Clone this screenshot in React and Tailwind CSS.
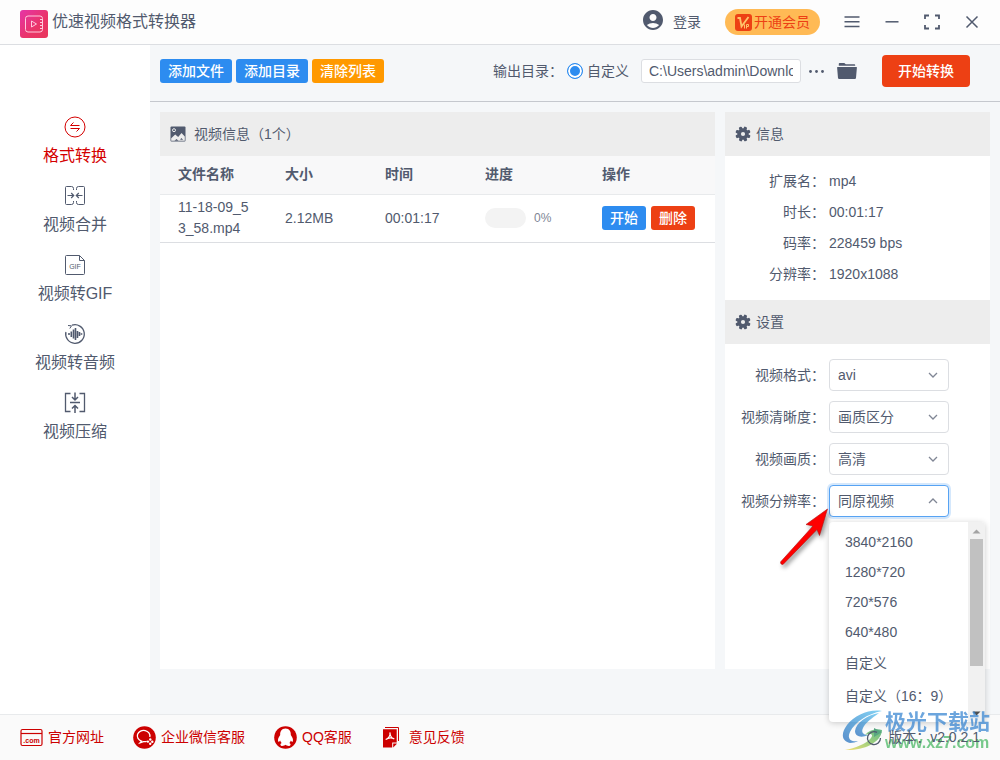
import React, { useState } from 'react';
import { MdAccountCircle } from 'react-icons/md';

const menus = [
  { key: 'convert', label: '格式转换' },
  { key: 'merge', label: '视频合并' },
  { key: 'gif', label: '视频转GIF' },
  { key: 'audio', label: '视频转音频' },
  { key: 'compress', label: '视频压缩' }
];

const files = [
  { name: '11-18-09_53_58.mp4', size: '2.12MB', time: '00:01:17', progress: 0 }
];

const info = [
  { label: '扩展名：', value: 'mp4' },
  { label: '时长：', value: '00:01:17' },
  { label: '码率：', value: '228459 bps' },
  { label: '分辨率：', value: '1920x1088' }
];

const settings = [
  { id: 'format', label: '视频格式：', options: ['avi', 'mp4', 'mov'] },
  { id: 'clarity', label: '视频清晰度：', options: ['画质区分', '自定义'] },
  { id: 'quality', label: '视频画质：', options: ['高清', '标清'] },
  { id: 'resolution', label: '视频分辨率：', options: ['同原视频', '3840*2160', '1280*720', '720*576', '640*480'] }
];

const resolutions = ['3840*2160', '1280*720', '720*576', '640*480'];
const customResolutions = ['自定义', '自定义（16：9）'];

function MenuIcon({ name }) {
  const props = { viewBox: '0 0 22 22', className: 'w-[22px] h-[22px]', fill: 'none', stroke: 'currentColor', strokeWidth: 1, 'aria-hidden': true };
  if (name === 'convert') {
    return (
      <svg {...props}>
        <circle cx="11" cy="11" r="10" />
        <path d="M15.5 9.5H6.5L9.5 6.5M6.500 12.500h9l-3 3" />
      </svg>
    );
  }
  if (name === 'merge') {
    return (
      <svg {...props}>
        <path d="M9.500 5V3.500a2 2 0 0 0-2-2h-5a1 1 0 0 0-1 1v16a1 1 0 0 0 1 1h5a2 2 0 0 0 2-2V16M12.500 5V3.500a2 2 0 0 1 2-2h5a1 1 0 0 1 1 1v16a1 1 0 0 1-1 1h-5a2 2 0 0 1-2-2V16" />
        <path strokeWidth="1.200" d="M3.500 10.500h6M7.200 8l2.500 2.500L7.200 13M18.500 10.500h-6M14.800 8l-2.500 2.500 2.500 2.500" />
      </svg>
    );
  }
  if (name === 'gif') {
    return (
      <svg {...props}>
        <path d="M15.500 1.500h-13a1 1 0 0 0-1 1v17a1 1 0 0 0 1 1h17a1 1 0 0 0 1-1v-13zv5h5" />
        <text x="11" y="15" textAnchor="middle" fontSize="7" stroke="none" fill="currentColor" className="font-['Liberation_Sans',sans-serif]">GIF</text>
      </svg>
    );
  }
  if (name === 'audio') {
    return (
      <svg {...props}>
        <path strokeWidth="1.300" d="M8 2.200A9.300 9.300 0 1 1 1.900 9" />
        <path strokeWidth="1" d="M4 2.500l3.500.3L5.800 5.500" />
        <path strokeWidth="1.600" d="M5 10v2M7.300 8.500v5.500M9.500 6.500v9M11.500 5v12M13.500 8v7M15.500 9v4M17.500 10.300v1.500" />
      </svg>
    );
  }
  return (
    <svg {...props}>
      <path strokeWidth="1.300" d="M6.500 1.500h-5v18h5M15.500 1.500h5v18h-5" />
      <path strokeWidth="1.500" d="M6 10.500h10M11 .5v7M8 5l3 3 3-3M11 21v-7M8 16.500l3-3 3 3" />
    </svg>
  );
}

function GearIcon() {
  return (
    <svg viewBox="0 0 16 16" className="w-4 h-4" fill="currentColor" aria-hidden="true">
      {[0, 45, 90, 135].map((angle) => (
        <rect key={angle} x="6.400" y="0.400" width="3.200" height="15.200" rx="1" transform={`rotate(${angle + 22} 8 8)`} />
      ))}
      <circle cx="8" cy="8" r="5.700" />
      <circle cx="8" cy="8" r="2.100" fill="#ededed" />
    </svg>
  );
}

function PanelTitle({ icon, gap, children }) {
  return (
    <h2 className={`h-11 flex items-center bg-[#ededed] px-2.5 ${gap}`}>
      {icon}
      {children}
    </h2>
  );
}

function FooterIcon({ name }) {
  const props = { viewBox: '0 0 23 23', className: 'w-[23px] h-[23px]', 'aria-hidden': true };
  if (name === 'site') {
    return (
      <svg {...props} fill="none" stroke="#cc0000">
        <rect x="1" y="3.500" width="21" height="16" rx="1.500" strokeWidth="1.200" />
        <path strokeWidth="1.200" d="M1 7.500h21" />
        <text x="11.500" y="17" textAnchor="middle" fontSize="7" fontWeight="bold" stroke="none" fill="#cc0000" className="font-['Liberation_Sans',sans-serif]">.com</text>
      </svg>
    );
  }
  if (name === 'wechat') {
    return (
      <svg {...props}>
        <circle cx="11.500" cy="11.500" r="11.300" fill="#cc0000" />
        <path fill="none" stroke="#fff" strokeWidth="1.300" d="M16.800 11A6.300 5.500 0 1 0 8.500 15.100l-1.500 1.800 3.500-1.300c1.200.2 2.200.1 3.200-.3" />
        <g fill="#fff">
          <circle cx="17.300" cy="13.500" r="1.200" />
          <circle cx="19.300" cy="15.800" r="1.200" />
          <circle cx="14.900" cy="15.600" r="1.200" />
          <circle cx="17.200" cy="17.700" r="1.200" />
        </g>
      </svg>
    );
  }
  if (name === 'qq') {
    return (
      <svg {...props}>
        <circle cx="11.500" cy="11.500" r="11.300" fill="#cc0000" />
        <path fill="#fff" d="M11.500 2.500C7.500 2.500 6 5.500 6.200 9c-1.600 2.200-2.700 4.600-2 6.500.5.900 1.300-.2 1.900-1.100.3 1 .8 1.800 1.500 2.500-1.800.9-1.500 2.900.6 3 1.400 0 2.600-.4 3.300-1.100.7.700 1.900 1.100 3.300 1.100 2.100-.1 2.400-2.100.6-3 .7-.7 1.200-1.500 1.500-2.500.6.900 1.400 2 1.900 1.100.7-1.900-.4-4.300-2-6.500.2-3.500-1.300-6.500-5.300-6.500z" />
      </svg>
    );
  }
  return (
    <svg {...props}>
      <path fill="none" stroke="#cc0000" d="M4 1.500h13.500V15" />
      <path fill="#cc0000" d="M2 3.300h13.700v13.200h-4.500v5H2z" />
      <path fill="#cc0000" d="M12.200 17.500h3.500v.5l-3.500 3.500z" />
      <path fill="none" stroke="#fff" strokeWidth="1.200" d="M8.900 6.500c.8 3-1.500 6-4.200 7 2.500-1.700 6-2 8.500-.7-2-.3-4-2.800-4.300-6.300z" />
    </svg>
  );
}

const links = [
  { icon: 'site', label: '官方网址' },
  { icon: 'wechat', label: '企业微信客服' },
  { icon: 'qq', label: 'QQ客服' },
  { icon: 'pdf', label: '意见反馈' }
];

function Header() {
  return (
    <header className="h-[45px] flex items-center border-b border-[#dcdee2] bg-[#fdfdfd] pl-5 pr-2">
      <svg viewBox="0 0 28 28" className="w-7 h-7 mt-1" aria-hidden="true">
        <defs>
          <linearGradient id="logo" x1="0" y1="0" x2="1" y2="1">
            <stop offset="0" stopColor="#e535a8" />
            <stop offset="0.600" stopColor="#ea3468" />
            <stop offset="1" stopColor="#e8365c" />
          </linearGradient>
        </defs>
        <rect width="28" height="28" rx="3" fill="url(#logo)" />
        <g fill="none" stroke="#ffc9dc" strokeWidth="1">
          <rect x="5.500" y="6" width="17" height="16" rx="2.500" />
          <path d="M11.500 11v6l5-3zM20 9.500h2.500M20 12.500h2.500M20 15.500h2.500M20 18.500h2.500" />
        </g>
      </svg>
      <h1 className="ml-1 text-base leading-6">优速视频格式转换器</h1>
      <div className="flex-1"></div>
      <button className="flex items-center gap-2">
        <MdAccountCircle size={24} className="-mt-1" />
        登录
      </button>
      <button className="ml-6 h-[26px] px-2.5 flex items-center gap-0.5 rounded-full bg-[#ffba55] text-[#ed4014]">
        <svg viewBox="0 0 17 17" className="w-[17px] h-[17px]" aria-hidden="true">
          <rect width="17" height="17" rx="3" fill="#ed4014" />
          <path fill="none" stroke="#ffc46b" strokeWidth="1.800" d="M2.500 4h2.500l1.500 8.500L13.500 3" />
          <path fill="none" stroke="#ffc46b" strokeWidth="1" d="M9.500 10.500v4M11.500 14.500v-4h2v2h-2" />
        </svg>
        开通会员
      </button>
      <div className="ml-3 flex">
        <button aria-label="菜单" className="w-10 h-10 flex items-center justify-center">
          <svg viewBox="0 0 16 16" className="w-4 h-4" stroke="currentColor" strokeWidth="1.500"><path d="M.5 3h15M.5 7.800h15M.5 12.600h15" /></svg>
        </button>
        <button aria-label="最小化" className="w-10 h-10 flex items-center justify-center">
          <svg viewBox="0 0 16 16" className="w-4 h-4" stroke="currentColor" strokeWidth="1.500"><path d="M1.500 7.800h13" /></svg>
        </button>
        <button aria-label="最大化" className="w-10 h-10 flex items-center justify-center">
          <svg viewBox="0 0 16 16" className="w-4 h-4" fill="none" stroke="currentColor" strokeWidth="1.800"><path d="M1 5V1.500h4M11 1.500h4V5M15 11v3.500h-4M5 14.500H1V11" /></svg>
        </button>
        <button aria-label="关闭" className="w-10 h-10 flex items-center justify-center">
          <svg viewBox="0 0 16 16" className="w-4 h-4" stroke="currentColor" strokeWidth="1.500"><path d="M2.500 2.500l11 11M13.500 2.500l-11 11" /></svg>
        </button>
      </div>
    </header>
  );
}

function Toolbar() {
  const [path, setPath] = useState('C:\\Users\\admin\\Downloads');

  return (
    <div className="h-[57px] flex items-center border-b border-[#c5c8ce] pl-2.5 pr-[30px] pb-1">
      <div className="flex gap-1 text-white font-medium">
        <button className="h-6 px-2 rounded-[3px] bg-[#2d8cf0]">添加文件</button>
        <button className="h-6 px-2 rounded-[3px] bg-[#2d8cf0]">添加目录</button>
        <button className="h-6 px-2 rounded-[3px] bg-[#ff9900]">清除列表</button>
      </div>
      <div className="flex-1"></div>
      <span>输出目录：</span>
      <label className="ml-1 flex items-center gap-1">
        <input type="radio" name="output" defaultChecked
               className="appearance-none w-4 h-4 rounded-full border border-[#2d8cf0] bg-white checked:bg-[#2d8cf0] checked:shadow-[inset_0_0_0_2px_white]" />
        自定义
      </label>
      <input type="text" aria-label="输出目录" value={path} onChange={(e) => setPath(e.target.value)}
             className="ml-3 w-40 h-6 px-[7px] border border-[#dcdee2] rounded-[3px] bg-white" />
      <button aria-label="更多" className="ml-2">
        <svg viewBox="0 0 16 16" className="w-4 h-4" fill="currentColor"><circle cx="1.500" cy="8.500" r="1.400" /><circle cx="7.500" cy="8.500" r="1.400" /><circle cx="13.500" cy="8.500" r="1.400" /></svg>
      </button>
      <button aria-label="打开目录" className="ml-3">
        <svg viewBox="0 0 20 20" className="w-5 h-5" fill="currentColor">
          <path d="M1.800 4.800V3c0-.6.4-1 1-1h4.500l1.500 1.200h8.400c.6 0 1 .4 1 1v.600z" />
          <path d="M.6 6h18.800c.4 0 .6.3.5.6L19 17c-.1.700-.5 1-1.100 1H2.100c-.600 0-1-.3-1.100-1L.1 6.600c0-.3.1-.6.500-.6z" />
        </svg>
      </button>
      <button className="ml-[25px] h-8 px-4 rounded bg-[#ed4014] text-white font-medium">开始转换</button>
    </div>
  );
}

function FileList() {
  return (
    <section className="flex-1 bg-white">
      <PanelTitle gap="gap-2" icon={
        <svg viewBox="0 0 16 16" className="w-4 h-4" aria-hidden="true">
          <rect x="0.500" y="0.500" width="15" height="15" rx="1" fill="#515a6e" />
          <circle cx="4" cy="4.200" r="1.500" fill="none" stroke="#ededed" strokeWidth="1" />
          <path fill="#ededed" d="M1.200 14.800v-2.500l4-3.800 3 2.500 3.300-4 3.300 3.500v4.300z" />
          <path fill="#515a6e" d="M4.500 14.800l2-1.800 2 1.800zM10 13.500l1.500-1.500 1.500 2z" />
        </svg>
      }>
        视频信息（1个）
      </PanelTitle>
      <table className="w-full table-fixed text-left">
        <thead className="bg-[#f8f8f9]">
          <tr className="h-[38px] border-b border-[#e8eaec]">
            <th className="w-[107px] pl-[18px] font-bold">文件名称</th>
            <th className="w-[100px] pl-[18px] font-bold">大小</th>
            <th className="w-[100px] pl-[18px] font-bold">时间</th>
            <th className="w-[117px] pl-[18px] font-bold">进度</th>
            <th className="pl-[18px] font-bold">操作</th>
          </tr>
        </thead>
        <tbody>
          {files.map((file) => (
            <tr key={file.name} className="h-12 border-b border-[#dcdee2]">
              <td className="px-[18px] break-all">{file.name}</td>
              <td className="pl-[18px]">{file.size}</td>
              <td className="pl-[18px]">{file.time}</td>
              <td className="pl-[18px]">
                <div className="flex items-center gap-2 text-xs text-[#808695]">
                  <div className="w-[41px] h-5 rounded-full bg-[#f3f3f3] overflow-hidden">
                    <div className="h-full bg-[#2d8cf0]" style={{ width: `${file.progress}%` }}></div>
                  </div>
                  {file.progress}%
                </div>
              </td>
              <td className="pl-[18px]">
                <div className="flex gap-[5px] text-white font-medium">
                  <button className="h-6 px-2 rounded-[3px] bg-[#2d8cf0]">开始</button>
                  <button className="h-6 px-2 rounded-[3px] bg-[#ed4014]">删除</button>
                </div>
              </td>
            </tr>
          ))}
        </tbody>
      </table>
    </section>
  );
}

function ResolutionMenu({ onPick }) {
  return (
    <div className="absolute z-10 left-0 top-[37px] w-[156px] h-[200px] flex bg-white rounded shadow-[0_1px_6px_rgba(0,0,0,0.2)] overflow-hidden">
      <ul className="flex-1 pt-[5px]">
        {resolutions.map((item) => (
          <li key={item}>
            <button onClick={() => onPick(item)} className="w-full h-[30px] px-4 text-left">{item}</button>
          </li>
        ))}
        {customResolutions.map((item) => (
          <li key={item}>
            <button onClick={() => onPick(item)} className="w-full h-[33px] px-4 text-left whitespace-nowrap">{item}</button>
          </li>
        ))}
      </ul>
      <div className="w-[17px] flex flex-col items-center bg-[#f1f1f1]">
        <svg viewBox="0 0 17 17" className="w-[17px] h-[17px]" fill="#a3a3a3"><path d="M4.500 11.500h8L8.500 7.500z" /></svg>
        <div className="w-[13px] h-[127px] bg-[#c1c1c1]"></div>
        <div className="flex-1"></div>
        <svg viewBox="0 0 17 17" className="w-[17px] h-[17px]" fill="#505050"><path d="M4.500 6.500h8l-4 4z" /></svg>
      </div>
    </div>
  );
}

function SettingRow({ setting, open, setOpen }) {
  const [options, setOptions] = useState(setting.options);
  const [value, setValue] = useState(setting.options[0]);

  const handlePick = (item) => {
    if (!options.includes(item)) {
      setOptions([...options, item]);
    }
    setValue(item);
    setOpen(false);
  };

  return (
    <div className="flex items-center gap-1">
      <label htmlFor={setting.id} className="w-[100px] text-right">{setting.label}</label>
      <div className="relative w-[120px]">
        <select id={setting.id} value={value} onChange={(e) => setValue(e.target.value)}
                className={`block appearance-none w-full h-8 px-2 rounded border bg-white ${open ? 'border-[#57a3f3] shadow-[0_0_0_2px_rgba(45,140,240,0.2)]' : 'border-[#dcdee2]'}`}>
          {options.map((item) => <option key={item}>{item}</option>)}
        </select>
        <svg viewBox="0 0 10 10" className="absolute right-[11px] top-[11px] w-2.5 h-2.5 pointer-events-none" fill="none" stroke="#808695" strokeWidth="1.300">
          <path d={open ? 'M1 7l4-4 4 4' : 'M1 3l4 4 4-4'} />
        </svg>
        {open && <ResolutionMenu onPick={handlePick} />}
        {open && (
          <svg viewBox="0 0 56 64" className="absolute z-20 -left-[53px] top-5 w-14 h-16 drop-shadow-[2px_3px_2px_rgba(0,0,0,0.4)] pointer-events-none" aria-hidden="true">
            <path fill="#fe0000" stroke="#b01010" strokeWidth="0.600" d="M51.500 4L30 19.500l7 1.500L4.500 57l.5 2 2 .5L41 24.500l2.500 6z" />
          </svg>
        )}
      </div>
    </div>
  );
}

function SidePanel() {
  const [open, setOpen] = useState(true);

  return (
    <aside className="w-[265px] bg-white">
      <PanelTitle gap="gap-[5px]" icon={<GearIcon />}>信息</PanelTitle>
      <dl className="py-2.5">
        {info.map((row) => (
          <div key={row.label} className="h-[31px] flex items-center gap-1">
            <dt className="w-[100px] text-right">{row.label}</dt>
            <dd>{row.value}</dd>
          </div>
        ))}
      </dl>
      <PanelTitle gap="gap-[5px]" icon={<GearIcon />}>设置</PanelTitle>
      <div className="pt-[15px] flex flex-col gap-2.5">
        {settings.map((setting) => (
          <SettingRow key={setting.id} setting={setting} open={setting.id === 'resolution' && open} setOpen={setOpen} />
        ))}
      </div>
    </aside>
  );
}

function Watermark() {
  return (
    <div className="absolute z-30 right-2.5 bottom-2 flex items-center pointer-events-none opacity-70">
      <svg viewBox="0 0 44 42" className="w-11 h-[42px]" aria-hidden="true">
        <defs>
          <linearGradient id="swirl" x1="0" y1="1" x2="1" y2="0">
            <stop offset="0" stopColor="#1763b8" />
            <stop offset="1" stopColor="#4fc0f0" />
          </linearGradient>
          <linearGradient id="leaf" x1="0" y1="1" x2="1" y2="0">
            <stop offset="0" stopColor="#f2d43a" />
            <stop offset="0.500" stopColor="#7cc04a" />
            <stop offset="1" stopColor="#1f9a55" />
          </linearGradient>
        </defs>
        <path fill="url(#swirl)" d="M41 1C28-1 14 5 6 15c-6 8-6 16 3 18 3 0 6-1 8-2-8 1-11-3-8-9C14 12 26 4 41 1z" />
        <path fill="url(#swirl)" d="M38 3C26 5 15 13 14 21c0 6 7 7 13 4-5 0-7-3-5-7 2-5 9-10 16-15z" />
        <path fill="url(#leaf)" d="M41 20c-6-2-13 0-17 5 5-2 9-1 6 3-5 6-16 10-26 12 16 1 36-6 37-20z" />
        <path fill="#14824f" d="M33 18l8 4-8 5z" />
      </svg>
      <div className="font-bold">
        <div className="text-[21px] leading-6 text-[#2f80d0]">极光下载站</div>
        <div className="text-base leading-[18px] text-[#3fb45c]">www.xz7.com</div>
      </div>
    </div>
  );
}

function App() {
  const [active, setActive] = useState('convert');

  return (
    <div className="relative min-h-screen flex flex-col overflow-hidden bg-white text-sm leading-[21px] text-[#515a6e] font-['Liberation_Sans','Noto_Sans_CJK_SC',sans-serif]">
      <Header />
      <div className="flex-1 flex">
        <nav className="w-[150px] pt-[71px] flex flex-col items-center gap-[17px]">
          {menus.map((item) => (
            <button key={item.key} onClick={() => setActive(item.key)}
                    className={`flex flex-col items-center gap-1.5 text-base leading-6 ${active === item.key ? 'text-[#d40000]' : ''}`}>
              <MenuIcon name={item.key} />
              {item.label}
            </button>
          ))}
        </nav>
        <main className="flex-1 flex flex-col bg-[#f5f7f9]">
          <Toolbar />
          <div className="flex-1 flex gap-2.5 px-2.5 pt-2.5 pb-[45px]">
            <FileList />
            <SidePanel />
          </div>
        </main>
      </div>
      <footer className="h-[46px] flex items-center gap-[29px] px-5 border-t border-[#e8eaec] bg-[#fafafa]">
        {links.map((link) => (
          <a key={link.label} href="#" className="flex items-center gap-[5px] text-[#cc0000]">
            <FooterIcon name={link.icon} />
            {link.label}
          </a>
        ))}
        <div className="flex-1"></div>
        <div className="relative z-40 flex items-center gap-1.5">
          <svg viewBox="0 0 16 16" className="w-4 h-4" fill="none" stroke="currentColor" strokeWidth="1.300" aria-hidden="true">
            <path d="M14.500 8A6.500 6.500 0 1 1 11 2.300" />
          </svg>
          版本：v2.0.2.1
        </div>
      </footer>
      <Watermark />
    </div>
  );
}

export default App;
